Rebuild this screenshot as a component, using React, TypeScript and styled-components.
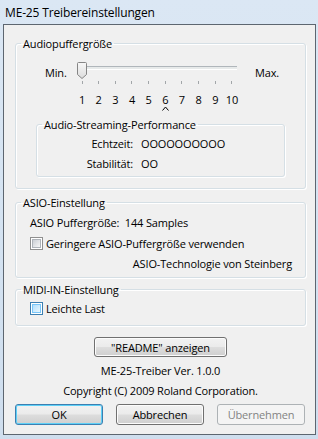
import React from "react"
import styled, { createGlobalStyle } from "styled-components"

const GlobalStyle = createGlobalStyle`
  html, body {
    margin: 0;
    padding: 0;
  }
  body {
    font-family: "Open Sans", "Noto Sans", sans-serif;
    font-size: 11px;
    letter-spacing: -0.15px;
    color: #000;
  }
`

const Window = styled.div`
  width: 318px;
  height: 439px;
  box-sizing: border-box;
  padding: 0 2px 4px 3px;
  display: flex;
  flex-direction: column;
  background: linear-gradient(180deg, #dbe7f4 0%, #d6e4f2 40%, #cfdeee 100%);
`
const TitleBar = styled.div`
  height: 24px;
  display: flex;
  align-items: center;
  padding-left: 2px;
  font-size: 12px;
  color: #000;
`
const Client = styled.div`
  flex: 1;
  border: 1px solid #5d6670;
  background: #f0f0f0;
  padding: 11px 9px 0 11px;
  display: flex;
  flex-direction: column;
`
const Group = styled.fieldset<{ $pb: number; $mt?: number }>`
  margin: ${p => p.$mt ?? 0}px 0 0 0;
  padding: 0 0 ${p => p.$pb}px 0;
  border: 1px solid #d5dfe5;
  border-radius: 3px;
  box-shadow: inset 1px 1px 0 #fff, 1px 1px 0 #fff;
  min-width: 0;
`
const Legend = styled.legend`
  padding: 0 2px;
  margin-left: 5px;
  line-height: 15px;
`
const SliderRow = styled.div`
  display: flex;
  align-items: flex-start;
  margin-top: 11px;
`
const EndLabel = styled.span<{ $w: number; $ml: number }>`
  width: ${p => p.$w}px;
  margin-left: ${p => p.$ml}px;
  margin-top: 3px;
  line-height: 15px;
`
const Slider = styled.div`
  position: relative;
  width: 166px;
`
const Track = styled.div`
  height: 16px;
  margin: 0 3px 0 6px;
  position: relative;
  &::before {
    content: "";
    position: absolute;
    left: 0;
    right: 0;
    top: 4px;
    height: 2px;
    background: #e7eaea;
    border-top: 1px solid #b0b6bb;
    border-bottom: 1px solid #fff;
  }
`
const Thumb = styled.svg`
  position: absolute;
  top: 0;
`
const Scale = styled.div`
  display: flex;
  justify-content: space-between;
`
const Cell = styled.span`
  width: 16px;
  display: flex;
  justify-content: center;
  line-height: 15px;
`
const Tick = styled.span`
  width: 1px;
  height: 3px;
  background: #a2a6a9;
  margin-top: 3px;
`
const Numbers = styled(Scale)`
  margin-top: 8px;
`
const CaretRow = styled(Scale)`
  height: 5px;
  margin-top: -1px;
`
const Inner = styled(Group)`
  margin: 6px 20px 11px 20px;
`
const PerfGrid = styled.div`
  display: grid;
  grid-template-columns: 96px auto;
  column-gap: 8px;
  row-gap: 5px;
  padding-top: 4px;
  line-height: 15px;
`
const PerfLabel = styled.span`
  text-align: right;
`
const Line = styled.div<{ $mt: number; $right?: boolean }>`
  line-height: 15px;
  margin-top: ${p => p.$mt}px;
  padding: 0 ${p => (p.$right ? 13 : 0)}px 0 14px;
  display: flex;
  align-items: center;
  justify-content: ${p => (p.$right ? "flex-end" : "flex-start")};
`
const Box = styled.span<{ $hot?: boolean }>`
  width: 13px;
  height: 13px;
  box-sizing: border-box;
  margin-right: 3px;
  border: 1px solid ${p => (p.$hot ? "#3c7fb1" : "#8f8f8f")};
  background: #fff;
  padding: 1px;
  display: flex;
  &::after {
    content: "";
    flex: 1;
    border: 1px solid ${p => (p.$hot ? "#79c6f9" : "#aeb3b9")};
    background: ${p =>
      p.$hot
        ? "linear-gradient(135deg, #b1dffd 0%, #e9f7fe 100%)"
        : "linear-gradient(135deg, #cbcfd5 0%, #f6f6f6 100%)"};
  }
`
const Button = styled.button<{ $w: number; $default?: boolean }>`
  width: ${p => p.$w}px;
  height: ${p => (p.$default !== undefined ? 21 : 20)}px;
  box-sizing: border-box;
  font: inherit;
  letter-spacing: inherit;
  color: #000;
  padding: 0;
  border-radius: 3px;
  border: 1px solid ${p => (p.$default ? "#3c7fb1" : "#707070")};
  background: linear-gradient(180deg, #f2f2f2 0%, #ebebeb 48%, #dddddd 52%, #cfcfcf 100%);
  box-shadow: inset 0 0 0 1px ${p => (p.$default ? "#5ed0f7" : "#fcfcfc")};
  &:disabled {
    border-color: #adb2b5;
    background: #f4f4f4;
    box-shadow: none;
    color: #838383;
  }
`
const CenterText = styled.div<{ $mt: number }>`
  text-align: center;
  line-height: 15px;
  margin-top: ${p => p.$mt}px;
`
const Readme = styled.div`
  display: flex;
  justify-content: center;
  margin-top: 11px;
`
const ButtonRow = styled.div`
  display: flex;
  gap: 13px;
  margin-top: 6px;
`

export default function App() {
  const levels = [1, 2, 3, 4, 5, 6, 7, 8, 9, 10]
  const value = 1
  return (
    <Window>
      <GlobalStyle />
      <TitleBar>ME-25 Treibereinstellungen</TitleBar>
      <Client>
        <Group $pb={0}>
          <Legend>Audiopuffergröße</Legend>
          <SliderRow>
            <EndLabel $w={29} $ml={29}>Min.</EndLabel>
            <Slider>
              <Track />
              <Thumb
                width="10"
                height="17"
                viewBox="0 0 10 17"
                style={{ left: 3 + (value - 1) * 16.67 }}
              >
                <defs>
                  <linearGradient id="tg" x1="0" y1="0" x2="0" y2="1">
                    <stop offset="0" stopColor="#f7f7f7" />
                    <stop offset="1" stopColor="#dcdcdc" />
                  </linearGradient>
                </defs>
                <path
                  d="M1.5 0.5 H8.5 Q9.5 0.5 9.5 1.5 V12.5 L5 16.5 L0.5 12.5 V1.5 Q0.5 0.5 1.5 0.5 Z"
                  fill="url(#tg)"
                  stroke="#858585"
                />
              </Thumb>
              <Scale>
                {levels.map(n => (
                  <Cell key={n}>
                    <Tick />
                  </Cell>
                ))}
              </Scale>
              <Numbers>
                {levels.map(n => (
                  <Cell key={n}>{n}</Cell>
                ))}
              </Numbers>
              <CaretRow>
                {levels.map(n => (
                  <Cell key={n}>
                    {n === 6 && (
                      <svg width="7" height="5" viewBox="0 0 7 5">
                        <path d="M0.5 4.5 L3.5 1 L6.5 4.5" fill="none" stroke="#000" />
                      </svg>
                    )}
                  </Cell>
                ))}
              </CaretRow>
            </Slider>
            <EndLabel $w={30} $ml={15}>Max.</EndLabel>
          </SliderRow>
          <Inner $pb={5}>
            <Legend>Audio-Streaming-Performance</Legend>
            <PerfGrid>
              <PerfLabel>Echtzeit:</PerfLabel>
              <span>OOOOOOOOOO</span>
              <PerfLabel>Stabilität:</PerfLabel>
              <span>OO</span>
            </PerfGrid>
          </Inner>
        </Group>

        <Group $pb={6} $mt={6}>
          <Legend>ASIO-Einstellung</Legend>
          <Line $mt={5}>ASIO Puffergröße:&nbsp;&nbsp;144 Samples</Line>
          <Line $mt={6}>
            <Box />
            Geringere ASIO-Puffergröße verwenden
          </Line>
          <Line $mt={5} $right>
            ASIO-Technologie von Steinberg
          </Line>
        </Group>

        <Group $pb={9} $mt={4}>
          <Legend>MIDI-IN-Einstellung</Legend>
          <Line $mt={4}>
            <Box $hot />
            Leichte Last
          </Line>
        </Group>

        <Readme>
          <Button $w={133}>"README" anzeigen</Button>
        </Readme>
        <CenterText $mt={6}>ME-25-Treiber Ver. 1.0.0</CenterText>
        <CenterText $mt={5}>Copyright (C) 2009 Roland Corporation.</CenterText>
        <ButtonRow>
          <Button $w={88} $default>OK</Button>
          <Button $w={88} $default={false}>Abbrechen</Button>
          <Button $w={88} $default={false} disabled>Übernehmen</Button>
        </ButtonRow>
      </Client>
    </Window>
  )
}
